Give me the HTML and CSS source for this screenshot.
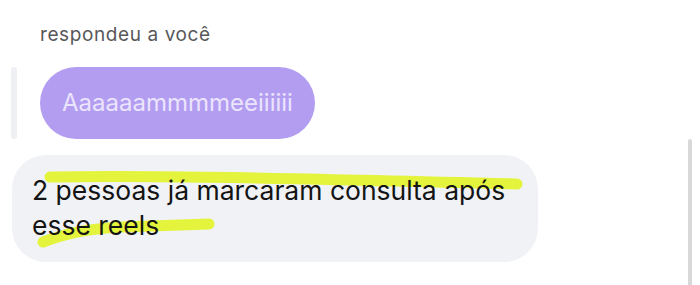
FILE: index.html
```html
<!DOCTYPE html>
<html lang="pt">
<head>
  <meta charset="UTF-8">
  <meta name="viewport" content="width=device-width, initial-scale=1.0">
  <title>Mensagens</title>
  <link rel="stylesheet" href="styles.css">
</head>
<body>
  <div class="thread">
    <div class="reply-label">respondeu a você</div>
    <div class="reply">
      <div class="quote-bar"></div>
      <div class="bubble-quoted">Aaaaaammmmeeiiiiii</div>
    </div>
    <div class="bubble-message">
      <svg class="highlight" width="526" height="107" viewBox="0 0 526 107">
        <path d="M38 22 C 150 20, 300 24, 505 29" />
        <path d="M31 87 C 50 80, 70 74, 110 72 L 197 69" />
      </svg>
      <p class="message-text">2 pessoas já marcaram consulta após esse reels</p>
    </div>
  </div>
  <div class="scrollbar"></div>
</body>
</html>
```

FILE: styles.css
```css
body {
  margin: 0;
  background: #ffffff;
  font-family: Inter, "Noto Sans", sans-serif;
  height: 285px;
  overflow: hidden;
  position: relative;
}
.thread {
  padding-top: 23px;
}
.reply-label {
  margin-left: 40px;
  font-size: 19px;
  line-height: 23px;
  letter-spacing: 0.6px;
  color: #58585a;
}
.reply {
  display: flex;
  align-items: stretch;
  margin-top: 21px;
}
.quote-bar {
  width: 6px;
  margin-left: 11px;
  border-radius: 3px;
  background: #eff0f3;
}
.bubble-quoted {
  margin-left: 23px;
  height: 72px;
  line-height: 72px;
  padding: 0 22px;
  border-radius: 36px;
  background: #b39df1;
  color: #ebe4fd;
  font-size: 24px;
}
.bubble-message {
  position: relative;
  margin: 16px 0 0 12px;
  width: 526px;
  box-sizing: border-box;
  padding: 18px 20px 19px;
  border-radius: 34px;
  background: #f0f2f5;
}
.highlight {
  position: absolute;
  left: 0;
  top: 0;
}
.highlight path {
  fill: none;
  stroke: #e4f43c;
  stroke-width: 11;
  stroke-linecap: round;
}
.message-text {
  position: relative;
  margin: 0;
  font-size: 26.5px;
  line-height: 35px;
  color: #141414;
}
.scrollbar {
  position: absolute;
  right: 8px;
  top: 139px;
  width: 4px;
  height: 160px;
  border-radius: 2px;
  background: #d8d8d8;
}
```
